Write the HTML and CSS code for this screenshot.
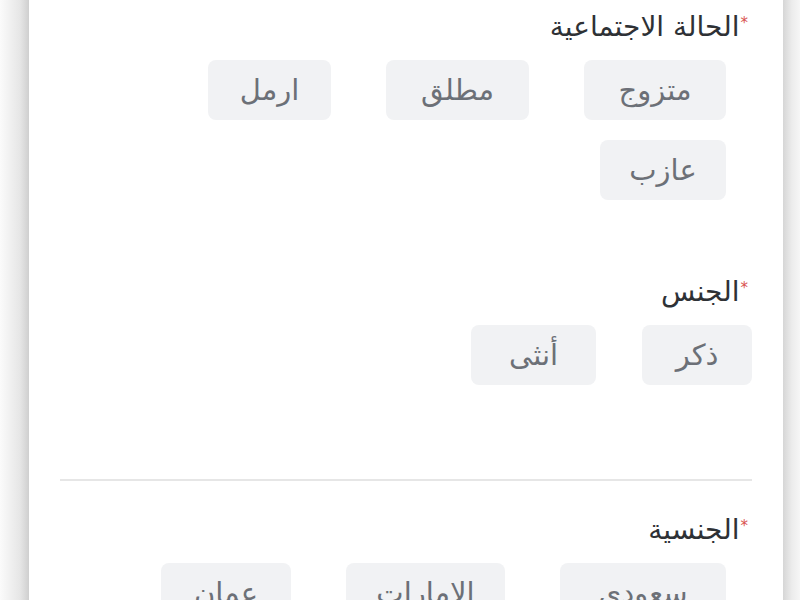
FILE: index.html
```html
<!DOCTYPE html>
<html lang="ar" dir="rtl">
<head>
<meta charset="utf-8">
<title>Form</title>
<link rel="stylesheet" href="styles.css">
</head>
<body>
<main class="card">
  <section class="field field-marital">
    <h2 class="label"><span class="req">*</span>الحالة الاجتماعية</h2>
    <div class="options options-inset">
      <button class="opt w142">متزوج</button>
      <button class="opt w143">مطلق</button>
      <button class="opt w123">ارمل</button>
      <button class="opt w126">عازب</button>
    </div>
  </section>
  <section class="field field-gender">
    <h2 class="label"><span class="req">*</span>الجنس</h2>
    <div class="options options-tight">
      <button class="opt w110">ذكر</button>
      <button class="opt w125">أنثى</button>
    </div>
  </section>
  <hr class="divider">
  <section class="field field-nationality">
    <h2 class="label"><span class="req">*</span>الجنسية</h2>
    <div class="options options-inset">
      <button class="opt w166">سعودي</button>
      <button class="opt w159">الامارات</button>
      <button class="opt w130">عمان</button>
    </div>
  </section>
</main>
</body>
</html>
```
FILE: styles.css
```css
html, body {
  margin: 0;
  padding: 0;
  height: 100%;
  overflow: hidden;
}
body {
  font-family: "DejaVu Sans", sans-serif;
  background: linear-gradient(to right,
    #fbfbfb 0px, #e6e6e6 20px, #cfcfcf 29px,
    #ffffff 29px, #ffffff 783px,
    #d6d6d6 783px, #ececec 792px, #f6f6f6 800px);
}
.card {
  margin: 0 17px 0 29px;
  padding: 12px 31px 0 31px;
  background: #ffffff;
  min-height: 600px;
  box-sizing: border-box;
}
.field { margin: 0; }
.label {
  margin: 0 4px 18px 0;
  font-size: 28px;
  line-height: 30px;
  font-weight: normal;
  color: #2e3135;
  display: flex;
  align-items: flex-start;
}
.req {
  color: #d9534f;
  font-size: 15px;
  line-height: 15px;
  margin-left: 1px;
  margin-top: 4px;
}
.options {
  display: flex;
  flex-wrap: wrap;
  row-gap: 20px;
}
.options-inset {
  padding-right: 26px;
  column-gap: 55px;
}
.options-tight {
  column-gap: 46px;
}
.opt {
  height: 60px;
  border: none;
  border-radius: 8px;
  background: #f1f2f4;
  color: #6c7077;
  font-family: inherit;
  font-size: 29px;
  padding: 0;
}
.w110 { width: 110px; }
.w123 { width: 123px; }
.w125 { width: 125px; }
.w126 { width: 126px; }
.w130 { width: 130px; }
.w142 { width: 142px; }
.w143 { width: 143px; }
.w159 { width: 159px; }
.w166 { width: 166px; }
.field-gender { margin-top: 77px; }
.divider {
  border: none;
  border-top: 2px solid #e6e6e6;
  margin: 94px 0 34px 0;
}
```
